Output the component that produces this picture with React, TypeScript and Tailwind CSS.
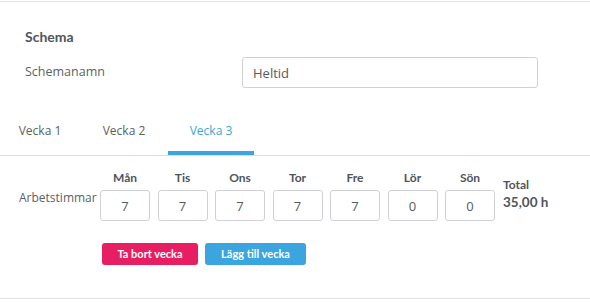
const days = [
  { label: "Mån", value: "7" },
  { label: "Tis", value: "7" },
  { label: "Ons", value: "7" },
  { label: "Tor", value: "7" },
  { label: "Fre", value: "7" },
  { label: "Lör", value: "0" },
  { label: "Sön", value: "0" },
];

const tabs = [
  { label: "Vecka 1", width: "w-[80px]", active: false },
  { label: "Vecka 2", width: "w-[88px]", active: false },
  { label: "Vecka 3", width: "w-[86px]", active: true },
];

export default function App() {
  return (
    <div className="w-[590px] h-[302px] bg-white pt-px font-['Lato',sans-serif] text-[#555a60]">
      <div className="border-t border-[#e1e1e1] h-[298px] border-b flex flex-col">
        {/* Schema header */}
        <div className="px-[25px] pt-[27px]">
          <h2 className="text-[14px] leading-4 font-bold text-[#50555b]">Schema</h2>
          <div className="mt-[12px] flex items-center">
            <label className="w-[217px] text-[12.5px] font-['Open_Sans',sans-serif] text-[#5a5f65]">
              Schemanamn
            </label>
            <input
              readOnly
              value="Heltid"
              className="w-[296px] h-[31px] rounded-[3px] border border-[#cfd1d4] px-[10px] text-[13px] font-['Open_Sans',sans-serif] text-[#555a60] outline-none"
            />
          </div>
        </div>

        {/* Week tabs */}
        <div className="mt-[35px] flex border-b border-[#dedede]">
          {tabs.map((t) => (
            <div
              key={t.label}
              className={`${t.width} pb-[13px] text-center text-[12px] leading-[15px] font-['Open_Sans',sans-serif] border-b-4 ${
                t.active ? "border-[#3aa5de] text-[#3aa5de]" : "border-transparent text-[#5a5f65]"
              }`}
            >
              {t.label}
            </div>
          ))}
        </div>

        {/* Hours */}
        <div className="flex pl-[19px] pt-[15px]">
          <div className="w-[81px] pt-[19px] text-[12px] leading-[15px] font-['Open_Sans',sans-serif] text-[#5a5f65]">
            Arbetstimmar
          </div>
          <div className="flex gap-[7.5px]">
            {days.map((d) => (
              <div key={d.label} className="flex flex-col items-center">
                <span className="text-[12px] leading-[14px] font-bold text-[#50555b]">{d.label}</span>
                <input
                  readOnly
                  value={d.value}
                  className="mt-[5px] w-[50px] h-[31px] rounded-[3px] border border-[#cfd1d4] text-center text-[13px] font-['Open_Sans',sans-serif] text-[#555a60] outline-none"
                />
              </div>
            ))}
          </div>
          <div className="ml-[8px] pt-[7px] font-bold text-[#50555b]">
            <div className="text-[12px] leading-[14px]">Total</div>
            <div className="mt-[2px] text-[13.5px] leading-4">35,00 h</div>
          </div>
        </div>

        {/* Actions */}
        <div className="flex gap-[7px] pl-[102px] mt-[22px]">
          <button className="w-[96px] h-[22px] rounded-[3px] bg-[#e81e62] text-white text-[11px] font-bold">
            Ta bort vecka
          </button>
          <button className="w-[101px] h-[22px] rounded-[3px] bg-[#3aa5de] text-white text-[11px] font-bold">
            Lägg till vecka
          </button>
        </div>
      </div>
    </div>
  );
}
